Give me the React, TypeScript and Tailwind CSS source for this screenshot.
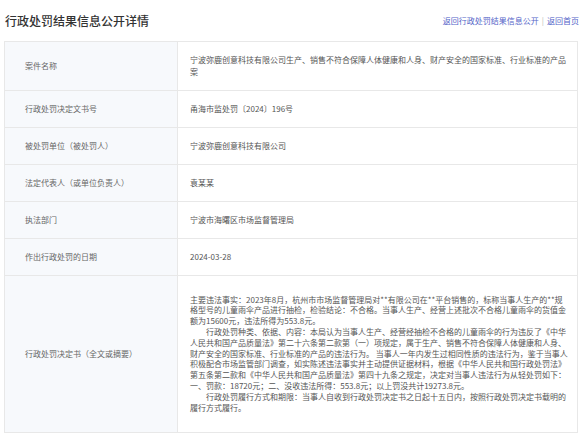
const rows: { label: string; value: string }[] = [
  {
    label: '案件名称',
    value:
      '宁波弥鹿创意科技有限公司生产、销售不符合保障人体健康和人身、财产安全的国家标准、行业标准的产品案',
  },
  { label: '行政处罚决定文书号', value: '甬海市监处罚〔2024〕196号' },
  { label: '被处罚单位（被处罚人）', value: '宁波弥鹿创意科技有限公司' },
  { label: '法定代表人（或单位负责人）', value: '袁某某' },
  { label: '执法部门', value: '宁波市海曙区市场监督管理局' },
  { label: '作出行政处罚的日期', value: '2024-03-28' },
]

const decision = [
  '主要违法事实：2023年8月，杭州市市场监督管理局对**有限公司在**平台销售的，标称当事人生产的**规格型号的儿童雨伞产品进行抽检，检验结论：不合格。当事人生产、经营上述批次不合格儿童雨伞的货值金额为15600元，违法所得为553.8元。',
  '行政处罚种类、依据、内容：本局认为当事人生产、经营经抽检不合格的儿童雨伞的行为违反了《中华人民共和国产品质量法》第二十六条第二款第（一）项规定，属于生产、销售不符合保障人体健康和人身、财产安全的国家标准、行业标准的产品的违法行为。 当事人一年内发生过相同性质的违法行为，鉴于当事人积极配合市场监管部门调查，如实陈述违法事实并主动提供证据材料，根据《中华人民共和国行政处罚法》第五条第二款和《中华人民共和国产品质量法》第四十九条之规定，决定对当事人违法行为从轻处罚如下：一、罚款：18720元；二、没收违法所得：553.8元；以上罚没共计19273.8元。',
  '行政处罚履行方式和期限：当事人自收到行政处罚决定书之日起十五日内，按照行政处罚决定书载明的履行方式履行。',
]

export default function App() {
  return (
    <div
      className="min-h-[438px] bg-white px-[4px] text-[#555]"
      style={{ fontFamily: '"Noto Sans CJK SC", "Noto Sans", sans-serif' }}
    >
      {/* 标题栏 */}
      <div className="flex h-[41px] items-center justify-between">
        <h1 className="pl-[1px] text-[12px] font-medium text-[#333]">行政处罚结果信息公开详情</h1>
        <div className="-mr-[3px] flex items-center gap-[3px] whitespace-nowrap text-[8px] text-[#5464c8]">
          <span>返回行政处罚结果信息公开</span>
          <span className="text-[#bbb]">|</span>
          <span>返回首页</span>
        </div>
      </div>

      {/* 详情表格 */}
      <div className="w-[574px] border border-[#e8e8e8] text-[8px]">
        {rows.map((r, i) => (
          <div
            key={r.label}
            className={`grid grid-cols-[173px_1fr] border-b border-[#e8e8e8] ${i === 0 ? 'min-h-[49px]' : 'h-[37px]'}`}
          >
            <div className="flex items-center border-r border-[#e8e8e8] bg-[#f7f9fc] pl-[20px] text-[#666]">
              {r.label}
            </div>
            <div className="flex items-center pl-[12px] pr-[9px] leading-[12px]">{r.value}</div>
          </div>
        ))}
        <div className="grid h-[156px] grid-cols-[173px_1fr]">
          <div className="flex items-center border-r border-[#e8e8e8] bg-[#f7f9fc] pl-[20px] text-[#666]">
            行政处罚决定书（全文或摘要）
          </div>
          <div className="flex flex-col justify-center pl-[12px] pr-[8px] leading-[10.8px]">
            {decision.map((p, i) => (
              <p key={i} className={i > 0 ? 'indent-[2em]' : ''}>
                {p}
              </p>
            ))}
          </div>
        </div>
      </div>
    </div>
  )
}
